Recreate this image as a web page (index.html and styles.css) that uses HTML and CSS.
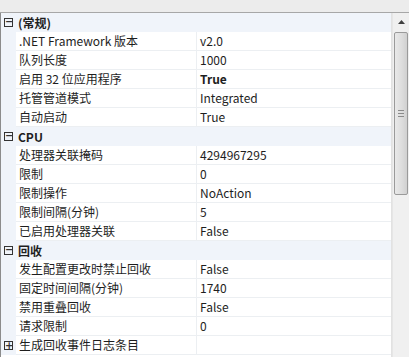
FILE: index.html
```html
<!DOCTYPE html>
<html lang="zh-CN">
<head>
  <meta charset="UTF-8" />
  <title>高级设置</title>
  <link rel="stylesheet" href="styles.css">
</head>
<body>
  <div class="toolbar"></div>
  <div class="panel">
    <div class="grid">
      <div class="row cat"><span class="box">−</span><span class="name">(常规)</span></div>
      <div class="row"><span class="gutter"></span><span class="name">.NET Framework 版本</span><span class="value">v2.0</span></div>
      <div class="row"><span class="gutter"></span><span class="name">队列长度</span><span class="value">1000</span></div>
      <div class="row"><span class="gutter"></span><span class="name">启用 32 位应用程序</span><span class="value bold">True</span></div>
      <div class="row"><span class="gutter"></span><span class="name">托管管道模式</span><span class="value">Integrated</span></div>
      <div class="row"><span class="gutter"></span><span class="name">自动启动</span><span class="value">True</span></div>
      <div class="row cat"><span class="box">−</span><span class="name">CPU</span></div>
      <div class="row"><span class="gutter"></span><span class="name">处理器关联掩码</span><span class="value">4294967295</span></div>
      <div class="row"><span class="gutter"></span><span class="name">限制</span><span class="value">0</span></div>
      <div class="row"><span class="gutter"></span><span class="name">限制操作</span><span class="value">NoAction</span></div>
      <div class="row"><span class="gutter"></span><span class="name">限制间隔(分钟)</span><span class="value">5</span></div>
      <div class="row"><span class="gutter"></span><span class="name">已启用处理器关联</span><span class="value">False</span></div>
      <div class="row cat"><span class="box">−</span><span class="name">回收</span></div>
      <div class="row"><span class="gutter"></span><span class="name">发生配置更改时禁止回收</span><span class="value">False</span></div>
      <div class="row"><span class="gutter"></span><span class="name">固定时间间隔(分钟)</span><span class="value">1740</span></div>
      <div class="row"><span class="gutter"></span><span class="name">禁用重叠回收</span><span class="value">False</span></div>
      <div class="row"><span class="gutter"></span><span class="name">请求限制</span><span class="value">0</span></div>
      <div class="row"><span class="gutter"><span class="box plus">+</span></span><span class="name">生成回收事件日志条目</span><span class="value"></span></div>
    </div>
    <div class="scrollbar">
      <div class="arrow">
        <svg width="7" height="4" viewBox="0 0 7 4"><polygon points="0,4 7,4 3.5,0" fill="#404040"/></svg>
      </div>
      <div class="thumb"><span class="grip"></span></div>
    </div>
  </div>
</body>
</html>
```

FILE: styles.css
```css
body {
  margin: 0;
  background: #fff;
  font-family: "Microsoft YaHei", "Noto Sans CJK SC", "Noto Sans", sans-serif;
  font-size: 12px;
  color: #1e1e1e;
  overflow: hidden;
}
.toolbar {
  height: 12px;
  background: #ececec;
  border-bottom: 1px solid #a7a7a7;
}
.panel {
  display: flex;
  height: 344px;
  border-left: 1px solid #8c8c8c;
}
.grid {
  width: 391px;
  display: flex;
  flex-direction: column;
  border-right: 1px solid #e2e2e2;
}
.row {
  display: flex;
  height: 19px;
  line-height: 18px;
  flex-shrink: 0;
}
.gutter {
  width: 15px;
  background: #f0f4fa;
  display: flex;
  align-items: center;
  justify-content: center;
}
.name {
  width: 177px;
  padding-left: 3px;
  border-right: 1px solid #eceff2;
  border-bottom: 1px solid #eceff2;
  white-space: nowrap;
  overflow: hidden;
}
.value {
  flex: 1;
  padding-left: 3px;
  border-bottom: 1px solid #eceff2;
}
.bold {
  font-weight: bold;
}
.cat {
  background: #f0f4fa;
  align-items: center;
}
.cat .name {
  font-weight: bold;
  border: none;
  padding-left: 5px;
}
.box {
  width: 9px;
  height: 9px;
  box-sizing: border-box;
  border: 1px solid #333;
  margin-left: 3px;
  font-size: 10px;
  line-height: 6px;
  text-align: center;
  font-family: "DejaVu Sans", sans-serif;
  font-weight: bold;
  color: #333;
}
.box.plus {
  margin-left: 0;
  line-height: 7px;
}
.scrollbar {
  width: 16px;
  background: #f0f0f0;
  border-left: 1px solid #e6e6e6;
  display: flex;
  flex-direction: column;
  align-items: center;
}
.arrow {
  height: 18px;
  display: flex;
  align-items: center;
}
.thumb {
  width: 14px;
  height: 163px;
  margin-top: 1px;
  box-sizing: border-box;
  border: 1px solid #9a9a9a;
  border-radius: 2px;
  background: linear-gradient(to right, #e9e9e9, #dcdcdc 60%, #d0d0d0);
  display: flex;
  align-items: center;
  justify-content: center;
}
.grip {
  width: 6px;
  height: 5px;
  border-top: 1px solid #8a8a8a;
  border-bottom: 1px solid #8a8a8a;
  background: linear-gradient(#fff0 2px, #8a8a8a 2px, #8a8a8a 3px, #fff0 3px);
}
```
